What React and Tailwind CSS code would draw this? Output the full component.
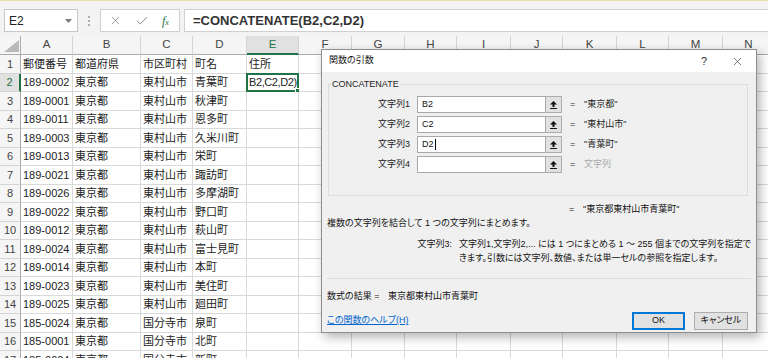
import { X, Check } from "lucide-react";

// Sheet data shown behind the dialog
const rows = [
  ["郵便番号", "都道府県", "市区町村", "町名", "住所"],
  ["189-0002", "東京都", "東村山市", "青葉町", "B2,C2,D2)"],
  ["189-0001", "東京都", "東村山市", "秋津町"],
  ["189-0011", "東京都", "東村山市", "恩多町"],
  ["189-0003", "東京都", "東村山市", "久米川町"],
  ["189-0013", "東京都", "東村山市", "栄町"],
  ["189-0021", "東京都", "東村山市", "諏訪町"],
  ["189-0026", "東京都", "東村山市", "多摩湖町"],
  ["189-0022", "東京都", "東村山市", "野口町"],
  ["189-0012", "東京都", "東村山市", "萩山町"],
  ["189-0024", "東京都", "東村山市", "富士見町"],
  ["189-0014", "東京都", "東村山市", "本町"],
  ["189-0023", "東京都", "東村山市", "美住町"],
  ["189-0025", "東京都", "東村山市", "廻田町"],
  ["185-0024", "東京都", "国分寺市", "泉町"],
  ["185-0001", "東京都", "国分寺市", "北町"],
  ["185-0004", "東京都", "国分寺市", "新町"],
];

const cols = ["A", "B", "C", "D", "E", "F", "G", "H", "I", "J", "K", "L", "M", "N"];
const widths = [
  "w-[52px]", "w-[68px]", "w-[52px]", "w-[54px]", "w-[52px]", "w-[53px]", "w-[53px]",
  "w-[52px]", "w-[54px]", "w-[52px]", "w-[54px]", "w-[52px]", "w-[54px]", "w-[52px]",
];

const args = [
  { label: "文字列1", value: "B2", result: "\"東京都\"" },
  { label: "文字列2", value: "C2", result: "\"東村山市\"" },
  { label: "文字列3", value: "D2", result: "\"青葉町\"", caret: true },
  { label: "文字列4", value: "", result: "文字列", muted: true },
];

function FormulaBar() {
  return (
    <div className="h-[35px] bg-[#f3f3f3] flex items-start pt-[8px] pl-[4px] shrink-0">
      <div className="w-[74px] h-[23px] bg-white border border-[#c6c6c6] flex items-center justify-between pl-[4px] pr-[5px]">
        <span className="text-[12px] text-[#222]">E2</span>
        <svg width="7" height="4" viewBox="0 0 7 4"><polygon points="0,0 7,0 3.5,4" fill="#7a7a7a" /></svg>
      </div>
      <div className="w-[22px] h-[23px] flex flex-col items-center justify-center gap-[2px]">
        <span className="w-[2px] h-[2px] bg-[#b0b0b0]" />
        <span className="w-[2px] h-[2px] bg-[#b0b0b0]" />
        <span className="w-[2px] h-[2px] bg-[#b0b0b0]" />
      </div>
      <div className="w-[80px] h-[23px] bg-white border border-[#d0d0d0] flex items-center pl-[8px] gap-[13px] text-[#7a7a7a]">
        <X size={13} strokeWidth={1.4} />
        <Check size={14} strokeWidth={1.6} />
        <span className="font-['Liberation_Serif',serif] italic text-[12px] text-[#217346] leading-none">
          f<span className="text-[8px]">x</span>
        </span>
      </div>
      <div className="ml-[4px] flex-1 h-[23px] bg-white border border-r-0 border-[#d0d0d0] flex items-center pl-[8px]">
        <span className="text-[13px] font-bold text-[#333]">=CONCATENATE(B2,C2,D2)</span>
      </div>
    </div>
  );
}

function Sheet() {
  return (
    <div className="flex flex-col">
      <div className="flex h-[19px] shrink-0">
        <div className="w-[21px] shrink-0 bg-[#f5f5f5] border-r border-b border-[#ababab] flex items-end justify-end pr-[1px] pb-[2px]">
          <svg width="15" height="12" viewBox="0 0 15 12"><polygon points="15,0 15,12 0,12" fill="#b9b9b9" /></svg>
        </div>
        {cols.map((c, i) => (
          <div
            key={c}
            className={`${widths[i]} shrink-0 flex items-center justify-center text-[11.5px] border-r border-[#d4d4d4] ${
              c === "E"
                ? "bg-[#e1e1e1] text-[#217346] border-b-2 border-b-[#217346]"
                : "bg-[#f5f5f5] text-[#444] border-b border-b-[#ababab]"
            }`}
          >
            {c}
          </div>
        ))}
      </div>
      {rows.map((r, ri) => (
        <div key={ri} className="flex h-[18.5px] shrink-0">
          <div
            className={`w-[21px] shrink-0 flex items-center justify-center text-[11px] border-b border-[#d4d4d4] ${
              ri === 1
                ? "bg-[#e1e1e1] text-[#217346] border-r-2 border-r-[#217346]"
                : "bg-[#f5f5f5] text-[#444] border-r border-r-[#ababab]"
            }`}
          >
            {ri + 1}
          </div>
          {cols.map((c, ci) => {
            const active = ri === 1 && c === "E";
            return (
              <div
                key={c}
                className={`${widths[ci]} shrink-0 relative border-r border-b border-[#d9d9d9] flex items-center pl-[2px] text-[11px] text-[#222] whitespace-nowrap`}
              >
                <span className={active ? "block overflow-hidden tracking-[-0.4px]" : "block overflow-hidden"}>
                  {r[ci] ?? ""}
                </span>
                {active && (
                  <div className="absolute -left-[1px] -top-[1px] -right-[1px] -bottom-[1px] border-2 border-[#217346]">
                    <span className="absolute -right-[3px] -bottom-[3px] w-[5px] h-[5px] bg-[#217346] border border-white" />
                  </div>
                )}
              </div>
            );
          })}
        </div>
      ))}
    </div>
  );
}

function RefButton() {
  return (
    <div className="w-[16px] h-[17px] bg-[#e1e1e1] border border-[#adadad] border-l-0 flex items-center justify-center">
      <svg width="7" height="8" viewBox="0 0 7 8">
        <polygon points="3.5,0 7,3.5 4.5,3.5 4.5,6 2.5,6 2.5,3.5 0,3.5" fill="#111" />
        <rect x="0" y="7" width="7" height="1" fill="#111" />
      </svg>
    </div>
  );
}

function Dialog() {
  return (
    <div className="absolute left-[321px] top-[49px] w-[436px] h-[284px] bg-[#f0f0f0] border border-[#8e8e8e] shadow-[3px_4px_10px_rgba(0,0,0,0.3)] flex flex-col text-[9px] text-[#111] [font-feature-settings:'palt']">
      <div className="h-[22px] bg-white flex items-center justify-between pl-[7px] pr-[12px] shrink-0">
        <span>関数の引数</span>
        <div className="flex items-center gap-[24px] text-[#333]">
          <span className="text-[11px]">?</span>
          <X size={13} strokeWidth={1.2} />
        </div>
      </div>
      <div className="flex-1 flex flex-col px-[5px] pt-[6px]">
        <fieldset className="border border-[#dcdcdc] px-0 pb-[22px] ml-[1px] mr-[3px]">
          <legend className="ml-[2px] px-[1px] leading-[12px] text-[#222]">CONCATENATE</legend>
          <div className="flex flex-col gap-[3px] mt-[6px]">
            {args.map((a) => (
              <div key={a.label} className="flex items-center h-[17px]">
                <span className="w-[81px] text-right text-[#222]">{a.label}</span>
                <div className="ml-[7px] w-[129px] h-[17px] bg-white border border-[#a8a8a8] flex items-center pl-[4px]">
                  {a.value}
                  {a.caret && <span className="w-px h-[11px] bg-black ml-[1px]" />}
                </div>
                <RefButton />
                <span className="ml-[8px] w-[14px] text-[#333]">=</span>
                <span className={a.muted ? "text-[#a6a6a6]" : "text-[#222]"}>{a.result}</span>
              </div>
            ))}
          </div>
        </fieldset>
        <div className="mt-[7px] pl-[242px] leading-[12px] flex">
          <span className="w-[14px]">=</span>
          <span>"東京都東村山市青葉町"</span>
        </div>
        <div className="mt-[2px] leading-[12px]">複数の文字列を結合して 1 つの文字列にまとめます。</div>
        <div className="mt-[8px] flex leading-[14px]">
          <span className="w-[145px] text-right">文字列3:</span>
          <div className="ml-[7px] flex flex-col whitespace-nowrap">
            <span>文字列1,文字列2,... には 1 つにまとめる 1 ～ 255 個までの文字列を指定で</span>
            <span>きます。引数には文字列、数値、または単一セルの参照を指定します。</span>
          </div>
        </div>
        <div className="mt-[13px] border-t border-[#dcdcdc]" />
        <div className="mt-[11px] leading-[12px]">
          数式の結果 = <span className="ml-[6px]">東京都東村山市青葉町</span>
        </div>
        <div className="mt-[10px] flex items-center justify-between pr-[3px]">
          <span className="text-[#0066cc] underline">この関数のヘルプ(H)</span>
          <div className="flex gap-[9px]">
            <button className="w-[53px] h-[18px] bg-[#e1e1e1] border-2 border-[#0078d7] flex items-center justify-center text-[#111]">OK</button>
            <button className="w-[54px] h-[18px] bg-[#e1e1e1] border border-[#adadad] flex items-center justify-center text-[#111]">キャンセル</button>
          </div>
        </div>
      </div>
    </div>
  );
}

export default function App() {
  return (
    <div className="w-[768px] h-[358px] overflow-hidden relative bg-white flex flex-col font-['Liberation_Sans','Noto_Sans_CJK_JP',sans-serif]">
      <div className="h-px bg-[#e6e1a6] shrink-0" />
      <FormulaBar />
      <Sheet />
      <Dialog />
    </div>
  );
}
